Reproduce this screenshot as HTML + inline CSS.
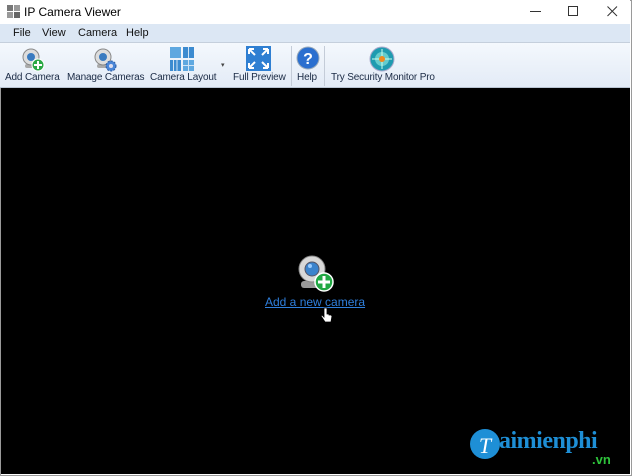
<!DOCTYPE html>
<html><head><meta charset="utf-8"><style>
*{margin:0;padding:0;box-sizing:border-box}
body{width:632px;height:476px;overflow:hidden;background:#fff;font-family:"Liberation Sans",sans-serif;position:relative}
.win{position:absolute;left:0;top:0;width:632px;height:476px;border:1px solid #9a9a9a}
.title{position:absolute;left:0;top:0;width:630px;height:24px;background:#fff;font-size:12px;color:#000}
.title span{position:absolute;left:24px;top:5px}
.menu{position:absolute;left:0;top:24px;width:630px;height:19px;background:#dce7f4;font-size:11px;color:#111;border-bottom:1px solid #c5cfdc}
.menu span{position:absolute;top:3px}
.tb{position:absolute;left:0;top:43px;width:630px;height:45px;background:linear-gradient(#f4f8fd,#e3ebf6);border-bottom:1px solid #b9c4d2}
.tb .l{position:absolute;top:29px;font-size:10px;letter-spacing:-0.15px;color:#1a2a44;white-space:nowrap}
.ic{position:absolute}
.main{position:absolute;left:1px;top:88px;width:629px;height:386px;background:#000}
.link{position:absolute;left:265px;top:295px;font-size:12px;color:#2f7fdc;text-decoration:underline}
.wm{position:absolute;top:428px;font-size:24px;font-weight:bold;color:#1e8fd6;font-family:"Liberation Serif",serif;letter-spacing:-0.5px}
.vn{position:absolute;left:592px;top:452px;font-size:13px;color:#2ec23b;font-weight:bold}
</style></head><body>
<div class="win"></div>
<div class="title">
<svg class="ic" style="left:7px;top:5px" width="13" height="13"><rect x="0" y="0" width="6" height="6" fill="#777"/><rect x="7" y="0" width="6" height="6" fill="#999"/><rect x="0" y="7" width="6" height="6" fill="#999"/><rect x="7" y="7" width="6" height="6" fill="#666"/></svg>
<span>IP Camera Viewer</span>
<svg class="ic" style="left:530px;top:11px" width="12" height="2"><rect width="11" height="1" fill="#333"/></svg>
<svg class="ic" style="left:568px;top:6px" width="11" height="11"><rect x="0.5" y="0.5" width="9" height="9" fill="none" stroke="#333"/></svg>
<svg class="ic" style="left:607px;top:6px" width="11" height="11"><path d="M0.5 0.5L10 10M10 0.5L0.5 10" stroke="#333"/></svg>
</div>
<div class="menu"><span style="left:13px">File</span><span style="left:42px">View</span><span style="left:78px">Camera</span><span style="left:126px">Help</span></div>
<div class="tb">
<svg class="ic" style="left:20px;top:4px" width="26" height="26"><rect x="5" y="17" width="12" height="4" rx="2" fill="#aaa"/><circle cx="11" cy="10" r="8" fill="#ddd" stroke="#888"/><circle cx="11" cy="10" r="4" fill="#3a7bc0"/><circle cx="18" cy="18" r="6" fill="#2aa845" stroke="#fff"/><path d="M18 14v8M14 18h8" stroke="#fff" stroke-width="2"/></svg>
<span class="l" style="left:5px">Add Camera</span>
<svg class="ic" style="left:92px;top:4px" width="26" height="26"><rect x="5" y="17" width="12" height="4" rx="2" fill="#aaa"/><circle cx="11" cy="10" r="8" fill="#ddd" stroke="#888"/><circle cx="11" cy="10" r="4" fill="#3a7bc0"/><circle cx="19" cy="19" r="5" fill="#4a86d8" stroke="#2a5aa0" stroke-dasharray="2 1.3"/><circle cx="19" cy="19" r="2" fill="#dde"/></svg>
<span class="l" style="left:67px">Manage Cameras</span>
<svg class="ic" style="left:169px;top:3px" width="26" height="26"><rect x="1" y="1" width="11" height="11" fill="#5fa8e0"/><rect x="14" y="1" width="11" height="11" fill="#3c8bd0"/><rect x="1" y="14" width="11" height="11" fill="#3c8bd0"/><rect x="14" y="14" width="11" height="11" fill="#5fa8e0"/><path d="M19.5 1v11M4.5 14v11M8 14v11M14 19.5h11M19.5 14v11" stroke="#cfe3f5" stroke-width="1"/></svg>
<span style="position:absolute;left:221px;top:18px;font-size:7px;color:#444">▾</span>
<span class="l" style="left:150px">Camera Layout</span>
<svg class="ic" style="left:246px;top:3px" width="25" height="25"><rect width="25" height="25" fill="#2f7fd2"/><path d="M3 3l6 6M3 3h5M3 3v5M22 3l-6 6M22 3h-5M22 3v5M3 22l6-6M3 22h5M3 22v-5M22 22l-6-6M22 22h-5M22 22v-5" stroke="#fff" stroke-width="2"/></svg>
<span class="l" style="left:233px">Full Preview</span>
<div style="position:absolute;left:291px;top:3px;width:1px;height:40px;background:#c4ccd8"></div>
<svg class="ic" style="left:296px;top:3px" width="24" height="24"><circle cx="12" cy="12" r="11" fill="#2b6fcf" stroke="#9ab"/><text x="12" y="18" font-size="16" font-weight="bold" fill="#fff" text-anchor="middle" font-family="Liberation Sans">?</text></svg>
<span class="l" style="left:297px">Help</span>
<div style="position:absolute;left:324px;top:3px;width:1px;height:40px;background:#c4ccd8"></div>
<svg class="ic" style="left:369px;top:3px" width="26" height="26"><circle cx="13" cy="13" r="12" fill="#1f9bb0" stroke="#aac"/><circle cx="13" cy="13" r="7" fill="#6cc" /><path d="M13 3v20M3 13h20" stroke="#cfe" stroke-width="1"/><circle cx="13" cy="13" r="3" fill="#f08a20"/></svg>
<span class="l" style="left:331px">Try Security Monitor Pro</span>
</div>
<div class="main"></div>
<svg class="ic" style="left:295px;top:253px" width="42" height="40"><rect x="6" y="28" width="22" height="7" rx="3" fill="#999"/><circle cx="17" cy="16" r="13" fill="#d8d8d8" stroke="#888"/><circle cx="17" cy="16" r="7" fill="#3b83cc" stroke="#556"/><circle cx="15" cy="13" r="2" fill="#9cf"/><circle cx="29" cy="29" r="9" fill="#21a843" stroke="#fff" stroke-width="1.5"/><path d="M29 23v12M23 29h12" stroke="#fff" stroke-width="3"/></svg>
<div class="link">Add a new camera</div>
<svg class="ic" style="left:321px;top:307px" width="12" height="16"><path d="M3 1v9l-2-2-1 1 4 6h6l1-6-1-1-2 0v-1l-2 0V1z" fill="#fff" stroke="#000" stroke-width="0.8"/></svg>
<svg class="ic" style="left:469px;top:428px" width="32" height="32"><circle cx="16" cy="16" r="15" fill="#1e8fd6"/><text x="16" y="25" font-size="22" fill="#fff" text-anchor="middle" font-family="Liberation Serif" font-style="italic">T</text></svg>
<div class="wm" style="left:499px">aimienphi</div>
<div class="vn">.vn</div>
</body></html>
